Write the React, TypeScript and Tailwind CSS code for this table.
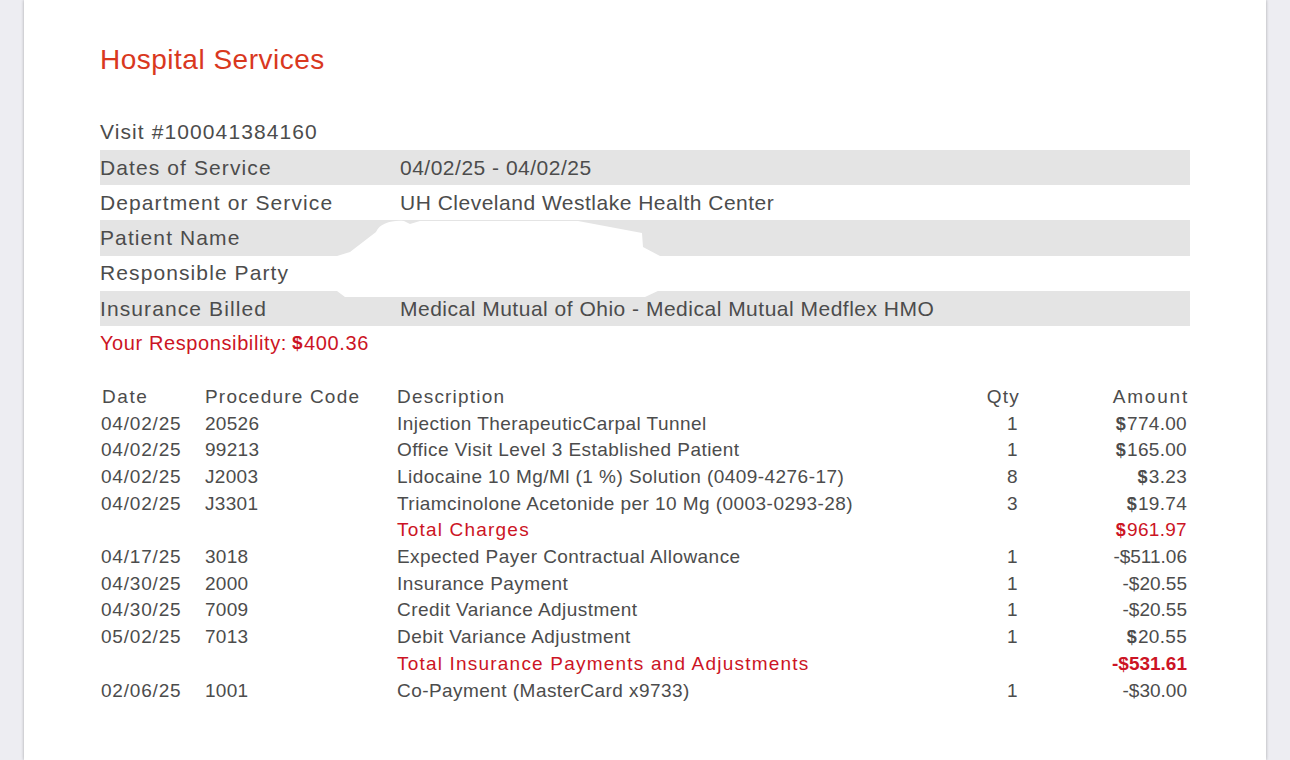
import React from 'react';

const FONT = { fontFamily: '"Liberation Sans Narrow", "Liberation Sans", Roboto, sans-serif' };

type Line = {
  date?: string;
  code?: string;
  desc: string;
  qty?: string;
  amount: React.ReactNode;
  total?: boolean;
};

function Money({ value }: { value: string }) {
  return (
    <span className="tracking-[0.3px]">
      <span className="font-bold mr-[1px] text-[18px]">$</span>
      {value}
    </span>
  );
}

const lines: Line[] = [
  { date: '04/02/25', code: '20526', desc: 'Injection TherapeuticCarpal Tunnel', qty: '1', amount: <Money value="774.00" /> },
  { date: '04/02/25', code: '99213', desc: 'Office Visit Level 3 Established Patient', qty: '1', amount: <Money value="165.00" /> },
  { date: '04/02/25', code: 'J2003', desc: 'Lidocaine 10 Mg/Ml (1 %) Solution (0409-4276-17)', qty: '8', amount: <Money value="3.23" /> },
  { date: '04/02/25', code: 'J3301', desc: 'Triamcinolone Acetonide per 10 Mg (0003-0293-28)', qty: '3', amount: <Money value="19.74" /> },
  { desc: 'Total Charges', total: true, amount: <Money value="961.97" /> },
  { date: '04/17/25', code: '3018', desc: 'Expected Payer Contractual Allowance', qty: '1', amount: <span className="tracking-normal">-$511.06</span> },
  { date: '04/30/25', code: '2000', desc: 'Insurance Payment', qty: '1', amount: <span className="tracking-normal">-$20.55</span> },
  { date: '04/30/25', code: '7009', desc: 'Credit Variance Adjustment', qty: '1', amount: <span className="tracking-normal">-$20.55</span> },
  { date: '05/02/25', code: '7013', desc: 'Debit Variance Adjustment', qty: '1', amount: <Money value="20.55" /> },
  { desc: 'Total Insurance Payments and Adjustments', total: true, amount: <span className="font-bold tracking-normal">-$531.61</span> },
  { date: '02/06/25', code: '1001', desc: 'Co-Payment (MasterCard x9733)', qty: '1', amount: <span className="tracking-normal">-$30.00</span> },
];

const info = [
  { label: 'Dates of Service', value: '04/02/25 - 04/02/25' },
  { label: 'Department or Service', value: 'UH Cleveland Westlake Health Center' },
  { label: 'Patient Name', value: '' },
  { label: 'Responsible Party', value: '' },
  { label: 'Insurance Billed', value: 'Medical Mutual of Ohio - Medical Mutual Medflex HMO' },
];

export default function App() {
  return (
    <div className="w-full h-[760px] bg-[#ededf2] overflow-hidden flex" style={FONT}>
      <div className="relative ml-[24px] w-[1242px] h-full bg-white shadow-[0_0_3px_rgba(0,0,0,0.3)] pl-[76px] pt-[40px] text-[#4c4c4c]">
        <h1 className="text-[28px] leading-[40px] tracking-[0.5px] text-[#d9381e]">Hospital Services</h1>

        <div className="mt-[34px] w-[1090px]">
          <div className="h-[36px] flex items-center text-[21px] tracking-[1.1px]">Visit #100041384160</div>
          {info.map((row, i) => (
            <div
              key={row.label}
              className={`h-[35.2px] flex items-center text-[21px] ${i % 2 === 0 ? 'bg-[#e4e4e4]' : ''}`}
            >
              <div className="w-[300px] tracking-[1.1px]">{row.label}</div>
              <div className="tracking-[0.5px]">{row.value}</div>
            </div>
          ))}
          <div className="h-[35px] flex items-center text-[20px] tracking-[0.6px] text-[#cc1424]">
            Your Responsibility:
            <span className="font-bold ml-[5px] mr-[1px] text-[19px]">$</span>400.36
          </div>
        </div>

        <div className="mt-[22px] w-[1087px] text-[19px] tracking-[0.45px]">
          <div className="grid grid-cols-[105px_192px_523px_100px_167px] h-[26.7px] items-center tracking-[1.2px]">
            <div className="pl-[2px] tracking-[1.6px]">Date</div>
            <div>Procedure Code</div>
            <div>Description</div>
            <div className="text-right">Qty</div>
            <div className="text-right tracking-[1.8px] -mr-[2px]">Amount</div>
          </div>
          {lines.map((l, i) => (
            <div key={i} className="grid grid-cols-[105px_192px_523px_100px_167px] h-[26.7px] items-center">
              <div className="pl-[1px] tracking-[0.8px]">{l.date}</div>
              <div className="tracking-[0.3px]">{l.code}</div>
              <div className={l.total ? 'text-[#cc1424] tracking-[1.2px]' : ''}>{l.desc}</div>
              <div className="text-right pr-[2px]">{l.qty}</div>
              <div className={`text-right ${l.total ? 'text-[#cc1424]' : ''}`}>{l.amount}</div>
            </div>
          ))}
        </div>

        <svg className="absolute left-0 top-0 pointer-events-none" width="1242" height="400" viewBox="24 0 1242 400">
          <path
            d="M 376 232 C 380 223 392 220 404 221 L 410 224 L 420 221 L 578 221 L 642 233 L 643 247 L 660 256 L 660 290 L 645 297 L 345 297 L 337 291 L 337 256 L 350 252 Z"
            fill="#ffffff"
          />
        </svg>
      </div>
    </div>
  );
}
